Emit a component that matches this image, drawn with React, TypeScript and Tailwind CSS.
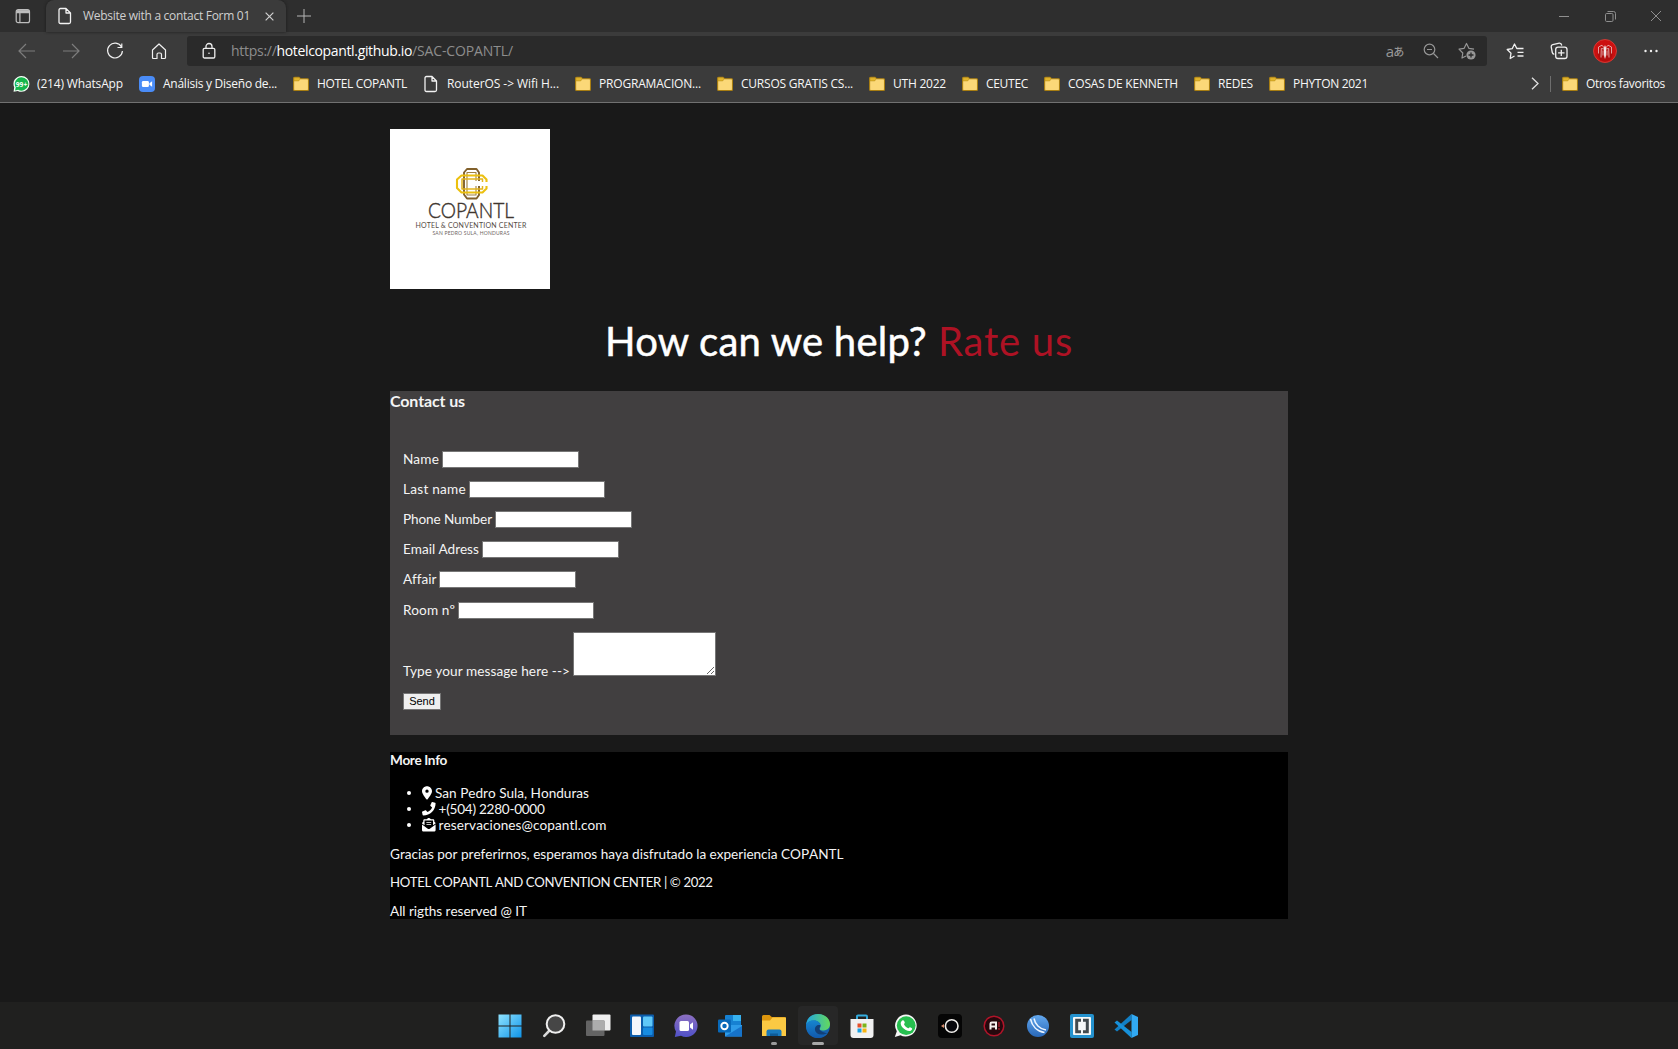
import React, { useLayoutEffect, useRef } from "react";
import { FaLocationDot, FaEnvelopeOpenText } from "react-icons/fa6";
import { FaPhone } from "react-icons/fa";

/* One line of text whose tracking is adjusted so that it fills its box. */
function Fit({ children, className = "" }: { children: string; className?: string }) {
  const outer = useRef<HTMLSpanElement>(null);
  const inner = useRef<HTMLSpanElement>(null);
  useLayoutEffect(() => {
    if (!outer.current || !inner.current) return;
    inner.current.style.letterSpacing = "0px";
    const room = outer.current.getBoundingClientRect().width;
    const natural = inner.current.getBoundingClientRect().width;
    inner.current.style.letterSpacing = `${(room - natural) / children.length}px`;
  }, [children]);
  return (
    <span ref={outer} className={"block shrink-0 whitespace-pre " + className}>
      <span ref={inner} className="inline-block">{children}</span>
    </span>
  );
}

const Page = ({ className = "" }) => (
  <svg viewBox="0 0 16 18" className={"h-[18px] w-4 shrink-0 " + className} fill="none" stroke="#f2f2f2" strokeWidth="1.3" strokeLinejoin="round">
    <path d="M3.5 1.5h5.5l4.5 4.5v9q0 1.5-1.5 1.5H3.500q-1.500 0-1.500-1.500V3q0-1.500 1.500-1.500zM9 1.500V6h4.500" />
  </svg>
);

const Folder = () => (
  <svg viewBox="0 0 16 16" className="h-4 w-4 shrink-0">
    <path d="M.6 2.200Q.6 1.200 1.600 1.200H6l1.500 1.500H14.500q1 0 1 1V13.500q0 1-1 1H1.600q-1 0-1-1z" fill="#fbd878" stroke="#a87e12" strokeWidth="1.100" />
    <path d="M1.100 1.700H5.900l1.200 1.200L5.800 4.900H1.100z" fill="#e3b52c" stroke="#b58a18" strokeWidth=".5" />
  </svg>
);

const WhatsBadge = () => (
  <svg viewBox="0 0 18 18" className="-mr-px h-[18px] w-[17px] shrink-0">
    <path d="M9 .5A8.400 8.400 0 0 1 9 17.300Q7 17.300 5 16.300L.6 17.300 1.300 12.500A8.400 8.400 0 0 1 9 .5z" fill="#f4fff6" />
    <path d="M9.100 1.800A7.100 7.100 0 1 1 5.500 15L2.200 15.900 2.900 12.500A7.100 7.100 0 0 1 9.100 1.800z" fill="#16b64c" />
    <text x="9" y="11.800" textAnchor="middle" fontSize="7.200" fontWeight="700" fill="white" fontFamily="Open Sans, sans-serif" textLength="12" lengthAdjust="spacingAndGlyphs">99+</text>
  </svg>
);

const Zoom = () => (
  <svg viewBox="0 0 16 16" className="h-4 w-4 shrink-0">
    <rect width="16" height="16" rx="4" fill="#4a8cf7" />
    <rect x="2.900" y="5" width="7" height="6" rx="1.300" fill="white" />
    <path d="M10.400 7.200l2.700-2v5.600l-2.700-2z" fill="white" />
  </svg>
);

type Bookmark = { icon: React.ReactNode; label: string; width: string };
const bookmarks: Bookmark[] = [
  { icon: <WhatsBadge />, label: "(214) WhatsApp", width: "w-[86px]" },
  { icon: <Zoom />, label: "Análisis y Diseño de...", width: "w-[114px]" },
  { icon: <Folder />, label: "HOTEL COPANTL", width: "w-[90px]" },
  { icon: <Page />, label: "RouterOS -> Wifi H...", width: "w-[112px]" },
  { icon: <Folder />, label: "PROGRAMACION...", width: "w-[102px]" },
  { icon: <Folder />, label: "CURSOS GRATIS CS...", width: "w-[112px]" },
  { icon: <Folder />, label: "UTH 2022", width: "w-[53px]" },
  { icon: <Folder />, label: "CEUTEC", width: "w-[42px]" },
  { icon: <Folder />, label: "COSAS DE KENNETH", width: "w-[110px]" },
  { icon: <Folder />, label: "REDES", width: "w-[35px]" },
  { icon: <Folder />, label: "PHYTON 2021", width: "w-[75px]" },
];

function Slot({ className, children }: { className: string; children: React.ReactNode }) {
  return <div className={"flex shrink-0 items-center justify-center " + className}>{children}</div>;
}

function TabStrip() {
  return (
    <div className="flex h-8 items-stretch bg-[#2e2e2e]">
      <Slot className="w-[46px]">
        <svg viewBox="0 0 16 16" className="h-4 w-4" fill="none" stroke="#bdbdbd" strokeWidth="1.200">
          <rect x="1.200" y="1.700" width="13.300" height="13" rx="2" />
          <path d="M1.200 4.600H14.500M4.900 4.600V14.500" />
          <path d="M1.500 3.200H14" strokeWidth="2.200" />
        </svg>
      </Slot>
      <div className="flex w-[240px] items-center rounded-t-lg bg-[#3b3b3b] pl-[11px] shadow-[0_0_3px_#1b1b1b]">
        <Page />
        <Fit className="ml-[10px] w-[167px] text-[12px] text-[#d0d0d0]">Website with a contact Form 01</Fit>
        <svg viewBox="0 0 10 10" className="ml-[15px] h-[9px] w-[9px]" stroke="#d0d0d0" strokeWidth="1.300"><path d="M.7.7l8.600 8.600M9.300.7L.7 9.300" /></svg>
      </div>
      <Slot className="w-[35px]">
        <svg viewBox="0 0 14 14" className="h-[14px] w-[14px]" stroke="#b5b5b5" strokeWidth="1"><path d="M7 0v14M0 7h14" /></svg>
      </Slot>
      <div className="ml-auto flex text-[#8f8f8f]">
        <Slot className="w-[46px]">
          <svg viewBox="0 0 10 10" className="h-[10px] w-[10px]" stroke="currentColor"><path d="M0 5.500h10" /></svg>
        </Slot>
        <Slot className="w-[46px]">
          <svg viewBox="0 0 11 11" className="h-[11px] w-[11px]" fill="none" stroke="currentColor"><rect x=".5" y="2.500" width="7.500" height="8" rx="1.200" /><path d="M2.500.5H8.500q2 0 2 2V8.500" /></svg>
        </Slot>
        <Slot className="w-[45px]">
          <svg viewBox="0 0 10 10" className="h-[10px] w-[10px]" stroke="currentColor"><path d="M0 0l10 10M10 0L0 10" /></svg>
        </Slot>
      </div>
    </div>
  );
}

function Toolbar() {
  return (
    <div className="flex h-[38px] items-center">
      <div className="flex w-[187px] shrink-0 pl-[5px]">
        <Slot className="w-11">
          <svg viewBox="0 0 18 16" className="h-4 w-[18px]" fill="none" stroke="#7d7d7d" strokeWidth="1.200"><path d="M17 8H1.500M8 1L1 8l7 7" /></svg>
        </Slot>
        <Slot className="w-11">
          <svg viewBox="0 0 18 16" className="h-4 w-[18px]" fill="none" stroke="#7d7d7d" strokeWidth="1.200"><path d="M1 8h15.500M10 1l7 7-7 7" /></svg>
        </Slot>
        <Slot className="w-11">
          <svg viewBox="0 0 18 18" className="h-[18px] w-[18px]" fill="none" stroke="#f0f0f0" strokeWidth="1.200"><path d="M15.500 5A7.400 7.400 0 1 0 16.400 9M15.800 1.500V5.500H11.500" /></svg>
        </Slot>
        <Slot className="w-11">
          <svg viewBox="0 0 18 18" className="h-[18px] w-[18px]" fill="none" stroke="#f0f0f0" strokeWidth="1.200" strokeLinejoin="round"><path d="M2.500 8L9 2l6.500 6v7.500q0 1-1 1h-3v-4q0-1.500-1.500-1.500H8.500Q7 11 7 12.500v4H3.500q-1 0-1-1z" /></svg>
        </Slot>
      </div>
      <div className="flex h-[30px] w-[1300px] shrink-0 items-center rounded-[3px] bg-[#2a2a2a] pl-[14px]">
        <svg viewBox="0 0 16 18" className="h-[18px] w-4 shrink-0" fill="none" stroke="#ededed" strokeWidth="1.300">
          <rect x="2.200" y="6.300" width="11.600" height="9.700" rx="1.300" /><path d="M5 6V4.500a3 3 0 0 1 6 0V6" /><circle cx="8" cy="11.200" r=".8" fill="#ededed" stroke="none" />
        </svg>
        <div className="ml-[14px] flex text-[14px] leading-5">
          <Fit className="w-[45.500px] text-[#8d8d8d]">https://</Fit>
          <Fit className="w-[135.500px] text-white">hotelcopantl.github.io</Fit>
          <Fit className="w-[101px] text-[#8d8d8d]">/SAC-COPANTL/</Fit>
        </div>
        <div className="ml-auto flex pr-[2px] text-[#969696]">
          <Slot className="w-9">
            <span className="text-[15px] leading-4">a</span>
            <span className="-ml-px font-['Noto_Sans_CJK_JP',sans-serif] text-[11px] leading-4 font-medium">あ</span>
          </Slot>
          <Slot className="w-9">
            <svg viewBox="0 0 16 16" className="h-4 w-4" fill="none" stroke="currentColor" strokeWidth="1.200"><circle cx="6.500" cy="6.500" r="5.300" /><path d="M4 6.500h5M10.500 10.500l4.500 4.500" /></svg>
          </Slot>
          <Slot className="w-9">
            <svg viewBox="0 0 18 18" className="h-[18px] w-[18px]" fill="none" stroke="currentColor" strokeWidth="1.200" strokeLinejoin="round">
              <path d="M8 14l-4 2 .8-5L1 7.200l5-.8L8.500 1.500 11 6.400l5 .8" /><circle cx="13" cy="13" r="4.600" fill="currentColor" stroke="none" /><path d="M13 10.500v5M10.500 13h5" stroke="#2a2a2a" strokeWidth="1.300" />
            </svg>
          </Slot>
        </div>
      </div>
      <div className="flex pl-[5px]">
        <Slot className="w-[46px]">
          <svg viewBox="0 0 18 18" className="h-[18px] w-[18px]" fill="none" stroke="#f0f0f0" strokeWidth="1.300" strokeLinejoin="round"><path d="M8.500 14L4.200 16.500l.8-5.300L1.200 7.500l5-.8L8.500 2l2.300 4.500H17.500M11.500 10.300h6M11.500 14h6" /></svg>
        </Slot>
        <Slot className="w-[42px]">
          <svg viewBox="0 0 18 18" className="h-[18px] w-[18px]" fill="none" stroke="#f0f0f0" strokeWidth="1.300"><path d="M4.300 12.300Q2.600 12 2.300 10.500L1.200 4.800Q1 3 2.700 2.600L9.300 1.200Q11.300 1 11.800 3.500" /><rect x="5.700" y="5.200" width="11.300" height="11.300" rx="2.300" /><path d="M11.300 7.700v6.400M8.100 10.900h6.400" /></svg>
        </Slot>
        <Slot className="w-[49px]">
          <svg viewBox="0 0 24 24" className="h-6 w-6">
            <circle cx="12" cy="12" r="11.500" fill="#cc1010" stroke="#d9443c" strokeWidth=".8" />
            <circle cx="12" cy="15" r="7.500" fill="#960b0b" opacity=".5" />
            <path d="M12 6l1.200 3-.3 8-.9 3-.9-3-.3-8z" fill="#f6e8e8" />
            <path d="M11.300 9L9 6.200 5.500 8v6.500M11.300 10L8.300 9.500 8 18.500M12.700 9L15 6.200 18.500 8v6.500M12.700 10l3-.5.3 9M10 11.500v5M14 11.500v5" fill="none" stroke="#ecc4c4" strokeWidth=".8" />
          </svg>
        </Slot>
        <Slot className="w-[43px]">
          <svg viewBox="0 0 14 4" className="h-1 w-[14px]" fill="#f0f0f0"><circle cx="1.500" cy="2" r="1.200" /><circle cx="7" cy="2" r="1.200" /><circle cx="12.500" cy="2" r="1.200" /></svg>
        </Slot>
      </div>
    </div>
  );
}

function BookmarksBar() {
  return (
    <div className="flex h-[33px] items-center border-b border-[#717171] pb-[5px] pl-[13px] text-[12px] text-[#f7f7f7]">
      <div className="flex gap-4">
        {bookmarks.map((b) => (
          <div key={b.label} className="flex items-center gap-2">
            {b.icon}
            <Fit className={b.width}>{b.label}</Fit>
          </div>
        ))}
      </div>
      <div className="ml-auto flex items-center pr-[13px]">
        <svg viewBox="0 0 8 13" className="h-[13px] w-2" fill="none" stroke="#e0e0e0" strokeWidth="1.300"><path d="M1 .7l6 5.800-6 5.800" /></svg>
        <div className="mr-[11px] ml-[11px] h-4 w-px bg-[#6e6e6e]" />
        <Folder />
        <Fit className="ml-2 w-[79px]">Otros favoritos</Fit>
      </div>
    </div>
  );
}

function HotelLogo() {
  return (
    <svg viewBox="0 0 160 160" className="block h-40 w-40 bg-white">
      <g fill="none" strokeLinejoin="round">
        <path d="M89 52V43.500L86.500 40H77L74 43.500V65.500L77 69.500H86.500L89 66V57" stroke="#81602b" strokeWidth="1.900" />
        <path d="M86 52V43.500H77V66H86V57" stroke="#a08040" strokeWidth="1.100" />
        <path d="M96.500 53V50.500L92.500 46.500H71.500L67 50.500V59L71.500 63.500H92.500L96.500 59.500V57" stroke="#ecc00e" strokeWidth="2.100" />
        <path d="M92.500 53V50H72V60H92.500V57" stroke="#e2b41c" strokeWidth="1.500" />
      </g>
      <text x="38" y="89" fontFamily="Lato, sans-serif" fontWeight="300" fontSize="22" textLength="86" lengthAdjust="spacingAndGlyphs" fill="#40362f" stroke="#40362f" strokeWidth=".45">COPANTL</text>
      <text x="25.500" y="98.500" fontFamily="Lato, sans-serif" fontSize="7" textLength="111" fill="#554c45">HOTEL &amp; CONVENTION CENTER</text>
      <text x="42.500" y="106" fontFamily="Lato, sans-serif" fontSize="5" textLength="77" fill="#6e665f">SAN PEDRO SULA, HONDURAS</text>
    </svg>
  );
}

const fields = [
  { label: "Name", width: "w-[36px]", input: "w-[137px]" },
  { label: "Last name", width: "w-[63px]", input: "w-[136px]" },
  { label: "Phone Number", width: "w-[89px]", input: "w-[137px]" },
  { label: "Email Adress", width: "w-[76px]", input: "w-[137px]" },
  { label: "Affair", width: "w-[33px]", input: "w-[137px]" },
  { label: "Room nº", width: "w-[52px]", input: "w-[136px]" },
];

function ContactForm() {
  return (
    <section className="h-[344px] bg-[#413f40] text-[#f4f4f4]">
      <h2 className="h-[60px] text-[16px] leading-[19px] font-bold"><Fit className="w-[75px]">Contact us</Fit></h2>
      <form className="pl-[13px]">
        {fields.map((f) => (
          <label key={f.label} className="mb-[13px] flex h-[17.100px] items-center gap-[3px]">
            <Fit className={"-mt-px text-[13.600px] leading-4 " + f.width}>{f.label}</Fit>
            <input className={"h-[17px] border border-[#767676] bg-white " + f.input} />
          </label>
        ))}
        <label className="flex h-[44px] items-end gap-[3px]">
          <Fit className="-mb-[3px] w-[167px] text-[13.600px] leading-[15px]">{"Type your message here -->"}</Fit>
          <textarea className="h-[44px] w-[143px] border border-[#767676] bg-white" />
        </label>
        <button type="button" className="mt-[17px] block h-[17px] w-[38px] border border-[#767676] bg-[#efefef] text-center font-['Liberation_Sans',sans-serif] text-[11px] leading-[15px] text-black">Send</button>
      </form>
    </section>
  );
}

function MoreInfo() {
  return (
    <footer className="mt-[17px] h-[167px] bg-black text-[13.600px] leading-4 text-[#f4f4f4] [font-kerning:none]">
      <h3 className="font-bold"><Fit className="w-[57px]">More Info</Fit></h3>
      <ul className="mt-[17px] pl-[17px]">
        <li className="flex h-4 items-center"><i className="mr-[11px] h-1 w-1 rounded-full bg-white" /><FaLocationDot className="h-[13.600px] w-[10px] text-white" /><Fit className="ml-[3px] w-[154px]">San Pedro Sula, Honduras</Fit></li>
        <li className="flex h-4 items-center"><i className="mr-[11px] h-1 w-1 rounded-full bg-white" /><FaPhone className="h-[13.600px] w-[13.600px] text-white" /><Fit className="ml-[3px] w-[106px]">+(504) 2280-0000</Fit></li>
        <li className="flex h-4 items-center"><i className="mr-[11px] h-1 w-1 rounded-full bg-white" /><FaEnvelopeOpenText className="h-[13.600px] w-[13.600px] text-white" /><Fit className="ml-[3px] w-[168px]">reservaciones@copantl.com</Fit></li>
      </ul>
      <p className="mt-[13px]"><Fit className="w-[453.500px]">Gracias por preferirnos, esperamos haya disfrutado la experiencia COPANTL</Fit></p>
      <p className="mt-[12px]"><Fit className="w-[322.500px] text-[13.200px]">HOTEL COPANTL AND CONVENTION CENTER | © 2022</Fit></p>
      <p className="mt-[13px]"><Fit className="w-[137px]">All rigths reserved @ IT</Fit></p>
    </footer>
  );
}

const taskIcons: React.ReactNode[] = [
  <g key="start"><defs><linearGradient id="win" x2="1" y2="1"><stop stopColor="#8fe3ff" /><stop offset="1" stopColor="#0f94e8" /></linearGradient></defs><path d="M.5.500h11v11H.5zM12.500.500h11v11h-11zM.5 12.500h11v11H.5zM12.500 12.500h11v11h-11z" fill="url(#win)" /></g>,
  <g key="search" fill="none"><path d="M7.500 16.500L2.300 21.800" stroke="#d9d9d9" strokeWidth="2.600" strokeLinecap="round" /><circle cx="13.500" cy="10" r="8.800" fill="#464646" stroke="#efefef" strokeWidth="2" /></g>,
  <g key="tasks"><rect x="6.500" y=".5" width="18" height="16" rx="1" fill="#efefef" /><rect x="0" y="6.500" width="18.500" height="15.500" rx="1" fill="#646464" /><rect x="6.500" y="6.500" width="12" height="10" fill="#adadad" /></g>,
  <g key="widgets"><rect width="24" height="22.500" y=".5" rx="1" fill="#0b5cab" /><rect x="2" y="2.500" width="9" height="18.500" rx="1" fill="#f3f6fb" /><rect x="13" y="2.500" width="9.500" height="10" rx="1" fill="#5fc8f8" /><rect x="13" y="13.500" width="9.500" height="7.500" rx="1" fill="#178be0" /></g>,
  <g key="chat"><defs><linearGradient id="ch" x2="0" y2="1"><stop stopColor="#8c6fc0" /><stop offset="1" stopColor="#5051c8" /></linearGradient></defs><path d="M12 .5a11.300 11.300 0 1 1-5 21.300L.8 23 2 17.500A11.300 11.300 0 0 1 12 .5z" fill="url(#ch)" /><rect x="5.500" y="7" width="9.500" height="10" rx="1.500" fill="white" /><path d="M16 10.500l3-2.300v7.600l-3-2.300z" fill="white" /></g>,
  <g key="outlook"><rect x="7" y="1" width="16" height="13" rx="1" fill="#1681d2" /><rect x="15" y="1" width="8" height="6" fill="#37b1ee" /><path d="M7 11h17v11.500H7z" fill="#2d9be8" /><path d="M7 22.500L24 12v10.500z" fill="#1673ca" /><rect y="5.500" width="13" height="13" rx="1" fill="#0869b9" /><circle cx="6.500" cy="12" r="3.200" fill="none" stroke="white" strokeWidth="1.900" /></g>,
  <g key="files"><path d="M0 2.500Q0 1 1.500 1H7.500l2.300 2H22.500Q24 3 24 4.500V7H0z" fill="#dc950d" /><path d="M0 6.500H8L10.500 3.500H24V22H0z" fill="#fbc943" /><path d="M4.500 22v-4.500q0-2 2-2h11q2 0 2 2V22z" fill="#1879bc" /><path d="M8 22v-2.500h8V22z" fill="#0e5b96" /></g>,
  <g key="edge"><defs><linearGradient id="e1" x2="1"><stop stopColor="#21a5e3" /><stop offset="1" stopColor="#64da5b" /></linearGradient><linearGradient id="e2" x2="0" y2="1"><stop stopColor="#1685cf" /><stop offset="1" stopColor="#1159ad" /></linearGradient></defs><circle cx="12" cy="12" r="12" fill="#1562ad" /><path d="M0 11C1 3 6 0 12 0c8 0 12 5.500 12 10 0 5-4 6.500-7.500 6.500-2.500 0-3.500-1-2.500-2.500 2-3-.5-7.500-6-7.500C4 6.500 1 8.500 0 11z" fill="url(#e1)" /><path d="M0 12C0 8.500 4 6.500 7.500 6.500c3.500 0 6.500 2 7 5-2-1.500-6 .5-5.500 4.500.5 3.500 4 5.500 8 4.500 2-.5 4-1.500 4.500-1C19 23 15 24 12 24 5 24 0 18.500 0 12z" fill="url(#e2)" /><path d="M14.500 11.500c-2-1.500-6 .5-5.500 4.500.5 3 3.500 5 7.500 4.500 2 0 4-1.500 5-1-2.500-1-4-1-6.500-2.500s-1.500-3-.5-5.500z" fill="#123f77" /></g>,
  <g key="store"><path d="M7 6V2.500Q7 1.500 8 1.500h8q1 0 1 1V6" fill="none" stroke="#35aee0" strokeWidth="1.900" /><path d="M.5 5h23v16q0 3-3 3h-17q-3 0-3-3z" fill="#f1f1f1" /><path d="M7.500 9.500h4v4h-4z" fill="#e5502a" /><path d="M12.500 9.500h4v4h-4z" fill="#7cb518" /><path d="M7.500 14.500h4v4h-4z" fill="#18a1e3" /><path d="M12.500 14.500h4v4h-4z" fill="#f8b411" /></g>,
  <g key="whatsapp"><path d="M12 .5a11 11 0 1 1-5.500 20.700L.8 23l2-5.700A11 11 0 0 1 12 .5z" fill="#f6f6f6" /><circle cx="12.200" cy="11.600" r="9.400" fill="#26bf4f" /><path d="M8.300 6.500c1-.8 1.700-.3 2.500 2.100.1.800-1 1.300-.7 2 1 2 2.200 3 4 3.600.8.100 1.200-1.300 2-1 2.400 1 2.400 1.400 1.700 2.500-1.200 1.800-3.500 1.500-6.100.2-3-1.600-5-4.500-5-6.500 0-1.200.8-2.200 1.600-2.900z" fill="white" /></g>,
  <g key="ring"><rect width="24" height="24" rx="4" fill="#050505" /><circle cx="13.700" cy="12" r="6.300" fill="#08080c" stroke="#f1efec" strokeWidth="1.600" /><path d="M3 12l3-2v4z" fill="#d78d6c" /></g>,
  <g key="a"><circle cx="12" cy="12" r="9.800" fill="#26080d" stroke="#b01429" strokeWidth="1.500" /><path d="M8.500 15.500V9.800q0-1.300 1.300-1.300h4.200v7M8.500 12.500H14" fill="none" stroke="#f6eeee" strokeWidth="2" /><path d="M17 8v8" stroke="#a01727" strokeWidth="1.500" strokeDasharray="5 1" /></g>,
  <g key="winbox"><defs><linearGradient id="wb" x2="0" y2="1"><stop stopColor="#63a8ee" /><stop offset="1" stopColor="#2867b8" /></linearGradient></defs><circle cx="12" cy="12" r="11" fill="url(#wb)" /><path d="M4.500 5C6 12 11 17.500 18.500 18.500M8 4.500C9 10 13.500 15 20 16" fill="none" stroke="#edf5ff" strokeWidth="1.500" /></g>,
  <g key="brackets"><rect width="24" height="24" rx="2" fill="#2492ce" /><rect x="3" y="3" width="18" height="18" rx="1" fill="#f6f8f8" /><path d="M11 6.300H6.700V17.700H11M13 6.300h4.300v11.400H13" fill="none" stroke="#424a4e" strokeWidth="3" /></g>,
  <g key="code"><path d="M17.500 6L3 17.500.5 15.500 17.500 0z" fill="#127fc4" /><path d="M17.500 18L3 6.500.5 8.500 17.500 24z" fill="#1791da" /><path d="M17.500 0L24 3v18l-6.500 3z" fill="#31a9f3" /></g>,
];

function Taskbar() {
  return (
    <nav className="flex h-[47px] bg-[#20201f] pl-[489.500px]">
      {taskIcons.map((icon, i) => (
        <div key={i} className={"mt-[4px] mr-[4px] flex h-[39px] w-[40px] flex-col items-center rounded pt-[8px] " + (i === 7 ? "bg-[#272727]" : "")}>
          <svg viewBox="0 0 24 24" className="h-6 w-6 shrink-0 overflow-visible">{icon}</svg>
          {i === 6 && <i className="mt-[4px] h-[3px] w-[6px] shrink-0 rounded-full bg-[#9b9b9b]" />}
          {i === 7 && <i className="mt-[4px] h-[3px] w-3 shrink-0 rounded-full bg-[#a8a8a8]" />}
        </div>
      ))}
    </nav>
  );
}

export default function App() {
  return (
    <div className="flex h-[1049px] w-[1678px] flex-col overflow-hidden bg-[#191919] font-['Open_Sans',sans-serif]">
      <header className="bg-[#3b3b3b]">
        <TabStrip />
        <Toolbar />
        <BookmarksBar />
      </header>
      <main className="ml-[390px] w-[898px] grow pt-[26px] font-['Lato',sans-serif]">
        <HotelLogo />
        <h1 className="flex h-[102px] items-center justify-center gap-[11px] pt-[2px] text-[40px] leading-[50px]">
          <Fit className="w-[322px] text-white [-webkit-text-stroke:0.5px_white]">How can we help?</Fit>
          <Fit className="w-[135px] text-[#ae1224]">Rate us</Fit>
        </h1>
        <ContactForm />
        <MoreInfo />
      </main>
      <Taskbar />
    </div>
  );
}
